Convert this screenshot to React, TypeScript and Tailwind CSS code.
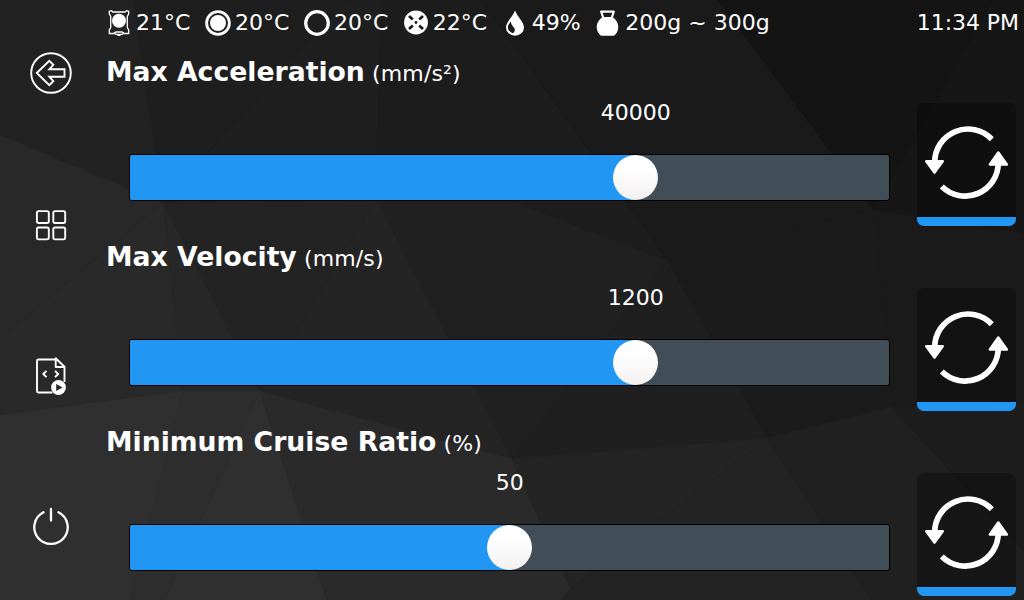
import type { ReactNode } from 'react';

const facets: [string, string][] = [
  ['0,0 134,0 163,203 0,135', '#222222'],
  ['134,0 346,0 163,203', '#1e1e1e'],
  ['346,0 382,0 376,200 163,203', '#1f1f1f'],
  ['382,0 480,0 509,38 376,170', '#1c1c1c'],
  ['509,38 667,260 500,197 376,200 376,170', '#1d1d1d'],
  ['480,0 718,0 874,210 667,260 509,38', '#1a1a1a'],
  ['718,0 993,0 874,210', '#141414'],
  ['993,0 1024,0 1024,233 874,210', '#161616'],
  ['874,210 1024,233 1024,401 892,407', '#1a1a1a'],
  ['667,260 874,210 892,407 767,438', '#1b1b1b'],
  ['376,200 500,197 667,260 512,459', '#202020'],
  ['163,203 376,200 260,391', '#232323'],
  ['376,200 512,459 260,391', '#242424'],
  ['163,203 260,391 183,391', '#272727'],
  ['0,135 163,203 0,339', '#282828'],
  ['0,339 163,203 183,391 0,415', '#292929'],
  ['667,260 767,438 512,459', '#1f1f1f'],
  ['0,415 183,391 130,600 0,600', '#2f2f2f'],
  ['183,391 260,391 165,600 130,600', '#2d2d2d'],
  ['260,391 327,600 165,600', '#2f2f2f'],
  ['260,391 512,459 571,589 560,600 327,600', '#2a2a2a'],
  ['512,459 767,438 571,589', '#242424'],
  ['767,438 872,600 560,600 571,589', '#232323'],
  ['767,438 892,407 1024,551 1024,600 872,600', '#202020'],
  ['892,407 1024,401 1024,551', '#1d1d1d'],
];

function Backdrop() {
  return (
    <svg className="absolute inset-0 -z-10" width="1024" height="600" viewBox="0 0 1024 600">
      {facets.map(([points, color]) => (
        <polygon key={points} points={points} fill={color} stroke={color} strokeWidth="0.6" />
      ))}
    </svg>
  );
}

function Reading({ icon, children }: { icon: ReactNode; children: ReactNode }) {
  return (
    <div className="flex items-center gap-[3px]">
      <svg width="28" height="28" viewBox="0 0 28 28" fill="none" stroke="white" className="shrink-0">
        {icon}
      </svg>
      <span className="whitespace-nowrap">{children}</span>
    </div>
  );
}

function TitleBar() {
  return (
    <header className="flex h-[45px] shrink-0 items-center pl-[105px] pr-[5px] text-[22px] leading-7">
      <div className="flex items-center gap-[13.600px]">
        <Reading
          icon={
            <>
              <path
                d="M8 3h12l1.500-1.300L23.700 2.300v2.500L22.300 7.500v11L23.700 21v3.500h-5.200l-1.500.8h-6l-1.500-.8H4.300V21l1.400-2.500v-11L4.300 4.800V2.300l2.200-.6z"
                strokeWidth="1.300"
              />
              <path d="M9 24l2-1h6l2 1M12.500 26.300h3" strokeWidth="1.300" />
              <circle cx="14" cy="11.700" r="7" fill="white" stroke="none" />
            </>
          }
        >
          21°C
        </Reading>
        <Reading
          icon={
            <>
              <circle cx="14" cy="14" r="11.400" strokeWidth="2.800" />
              <circle cx="14" cy="14" r="8" fill="white" stroke="none" />
            </>
          }
        >
          20°C
        </Reading>
        <Reading icon={<circle cx="14" cy="14" r="11.300" strokeWidth="3.200" />}>20°C</Reading>
        <Reading
          icon={
            <>
              <circle cx="14" cy="13.500" r="11.900" fill="white" stroke="none" />
              <path d="M7 7l3.800 3.500M21 7l-3.800 3.500M7 20l3.800-3.500M21 20l-3.800-3.500" stroke="#1b1b1b" strokeWidth="2.700" />
              <circle cx="14" cy="13.500" r="1.400" fill="#1b1b1b" stroke="none" />
            </>
          }
        >
          22°C
        </Reading>
        <Reading
          icon={
            <>
              <path d="M14 1.500C11.500 8 5 13 5 18.500a9 8.300 0 0 0 18 0C23 13 16.500 8 14 1.500z" fill="white" stroke="none" />
              <path d="M10 12.500C5.500 17 5.700 21.500 11.800 24.300c3.300-3 2.300-4.600-.3-7.500-1-1.100-1.600-2.600-1.500-4.300z" fill="#1b1b1b" stroke="none" />
            </>
          }
        >
          49%
        </Reading>
        <Reading
          icon={
            <>
              <path d="M9.300 9L7.200 2.600h12.600L17.700 9" strokeWidth="2.200" strokeLinejoin="round" />
              <path
                d="M8.500 8C5 10.500 2.700 14 2.700 18c0 3.500 1.600 6.700 4.300 8.700h13c2.700-2 4.300-5.200 4.300-8.700C24.300 14 22 10.500 18.500 8z"
                fill="white"
                stroke="none"
              />
            </>
          }
        >
          200g ~ 300g
        </Reading>
      </div>
      <span className="ml-auto whitespace-nowrap tracking-[-0.050px]">11:34 PM</span>
    </header>
  );
}

function NavButton({ children }: { children: ReactNode }) {
  return (
    <button className="size-11">
      <svg width="44" height="44" viewBox="0 0 44 44" fill="none" stroke="white" strokeWidth="1.900" strokeLinejoin="round">
        {children}
      </svg>
    </button>
  );
}

function Sidebar() {
  return (
    <nav className="flex w-[102px] shrink-0 flex-col items-center gap-[107px] pt-[6px]">
      <NavButton>
        <circle cx="22" cy="22" r="19.800" />
        <path d="M7.800 22L20.300 9.800l4 4-4 4.500H35.500v7.400H20.300l4 4.500-4 4z" strokeLinejoin="miter" />
      </NavButton>
      <NavButton>
        <rect x="7.900" y="9.100" width="11.900" height="11.900" rx="1.800" />
        <rect x="24.300" y="9.100" width="11.900" height="11.900" rx="1.800" />
        <rect x="7.900" y="25.500" width="11.900" height="11.900" rx="1.800" />
        <rect x="24.300" y="25.500" width="11.900" height="11.900" rx="1.800" />
      </NavButton>
      <NavButton>
        <path d="M26.500 6.500H9.500a1.500 1.500 0 0 0-1.500 1.500v30a1.500 1.500 0 0 0 1.500 1.500h14M35.500 15v14" />
        <path d="M26.700 5.300v8.700h9z" />
        <path d="M17.500 17.800L14.300 21l3.200 3.200M26 17.800l3.200 3.200-3.200 3.200" />
        <circle cx="29.500" cy="34.500" r="7.400" fill="white" stroke="none" />
        <path d="M27.200 31v7l6.300-3.500z" fill="#292929" stroke="none" />
      </NavButton>
      <NavButton>
        <path d="M14.500 8.300a16.700 16.700 0 1 0 15 0M22 5v11.500" strokeWidth="2.300" strokeLinecap="round" />
      </NavButton>
    </nav>
  );
}

function ResetButton() {
  return (
    <button className="mt-[58px] flex h-[123px] w-[99px] shrink-0 flex-col overflow-hidden rounded-[7px] border-b-[9px] border-[#2196f3] bg-black/30">
      <svg width="99" height="114" viewBox="0 0 99 114" fill="none">
        <path
          d="M17.700 60.300V59.600A33.200 33.200 0 0 1 74.800 36.200M81.300 59.300v.7A33.200 33.200 0 0 1 24.800 83.500"
          stroke="white"
          strokeWidth="5.700"
        />
        <path d="M9.300 58.200h16.400l-8.200 11.300zM72.900 61.400h16.900l-8.500-11.800z" fill="white" stroke="white" strokeWidth="2.600" strokeLinejoin="round" />
      </svg>
    </button>
  );
}

type Limit = { title: string; unit: string; value: number; position: number };

const limits: Limit[] = [
  { title: 'Max Acceleration', unit: '(mm/s²)', value: 40000, position: 505.5 },
  { title: 'Max Velocity', unit: '(mm/s)', value: 1200, position: 505.5 },
  { title: 'Minimum Cruise Ratio', unit: '(%)', value: 50, position: 379.5 },
];

function LimitRow({ title, unit, value, position }: Limit) {
  return (
    <section className="flex h-[185px]">
      <div className="flex w-[815px] flex-col pl-1">
        <h2 className="mt-[11px] h-8 whitespace-nowrap text-[22px] leading-8 tracking-[0.150px]">
          <b className="text-[26.670px] tracking-normal">{title}</b> {unit}
        </h2>
        <div className="ml-[23px] mt-[11px] w-[761px]">
          <div className="flex h-7 w-0 justify-center text-[22px] leading-7" style={{ marginLeft: position + 1.3 }}>
            {value}
          </div>
          <div className="mt-[27px] flex h-[47px] items-center rounded-[3px] border border-black bg-[#414e57]">
            <div className="h-full rounded-l-[2px] bg-[#2196f3]" style={{ width: position }} />
            <div className="-ml-[22.500px] size-[45px] rounded-full bg-linear-to-b from-white from-30% to-[#f3f1f0]" />
          </div>
        </div>
      </div>
      <ResetButton />
    </section>
  );
}

export default function App() {
  return (
    <div className="relative isolate flex h-[600px] w-[1024px] flex-col overflow-hidden bg-[#222222] font-['DejaVu_Sans',sans-serif] text-white">
      <Backdrop />
      <TitleBar />
      <div className="flex min-h-0 flex-1">
        <Sidebar />
        <main className="flex-1">
          {limits.map((limit) => (
            <LimitRow key={limit.title} {...limit} />
          ))}
        </main>
      </div>
    </div>
  );
}
